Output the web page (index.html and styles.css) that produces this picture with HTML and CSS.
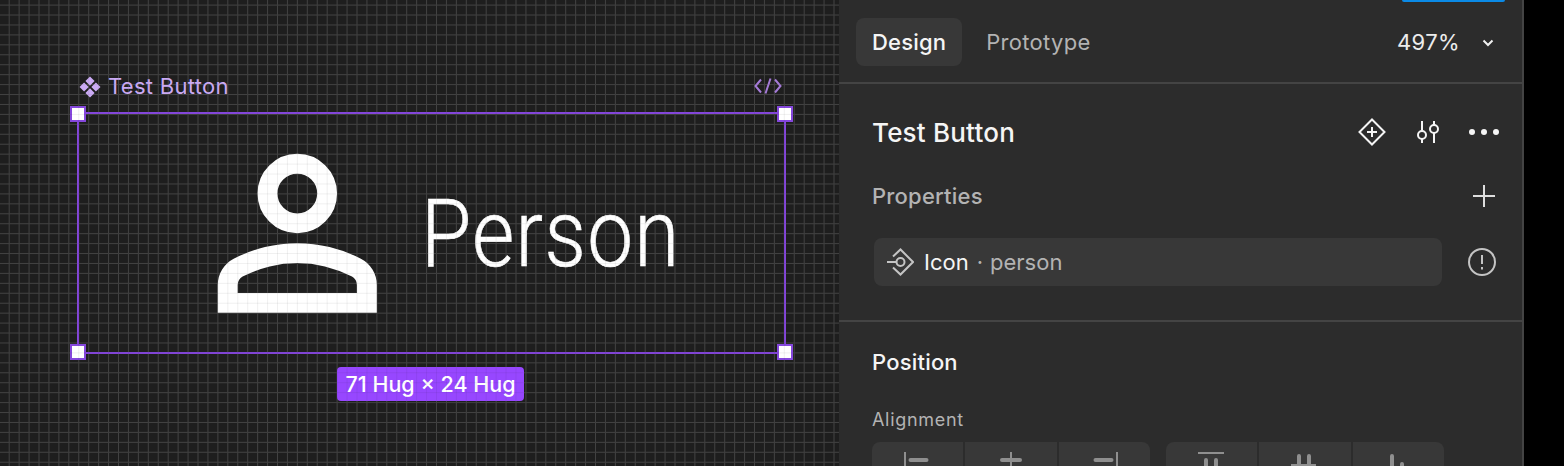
FILE: index.html
```html
<!DOCTYPE html>
<html lang="en">
<head>
  <meta charset="UTF-8" />
  <title>Test Button</title>
  <link rel="stylesheet" href="styles.css">
</head>
<body>
  <main class="canvas">
    <div class="frame-label">
      <svg class="diamonds" viewBox="0 0 22 22" width="22" height="22">
        <path d="M11 0.5l4.6 4.6L11 9.7 6.4 5.1zM5.1 6.4l4.6 4.6-4.6 4.6L0.5 11zM16.9 6.4l4.6 4.6-4.6 4.6L12.3 11zM11 12.3l4.6 4.6L11 21.5l-4.6-4.6z"/>
      </svg>
      <span>Test Button</span>
    </div>
    <svg class="code-mark" viewBox="0 0 28 18" width="28" height="18">
      <path d="M7 2.500L1.500 9 7 15.500M21 2.500L26.500 9 21 15.500M16.500 1.500L11.500 16.500"/>
    </svg>

    <div class="frame">
      <div class="button-preview">
        <svg class="person-icon" viewBox="0 -960 960 960">
          <path d="M480-480q-66 0-113-47t-47-113q0-66 47-113t113-47q66 0 113 47t47 113q0 66-47 113t-113 47ZM160-160v-112q0-34 17.5-62.5T224-378q62-31 126-46.5T480-440q66 0 130 15.5T736-378q29 15 46.5 43.5T800-272v112H160Zm80-80h480v-32q0-11-5.5-20T700-306q-54-27-109-40.5T480-360q-56 0-111 13.5T260-306q-9 5-14.5 14t-5.5 20v32Zm240-320q33 0 56.5-23.5T560-640q0-33-23.5-56.5T480-720q-33 0-56.5 23.5T400-640q0 33 23.5 56.5T480-560Z"/>
        </svg>
        <span class="person-text">Person</span>
      </div>
      <i class="handle top-left"></i>
      <i class="handle top-right"></i>
      <i class="handle bottom-left"></i>
      <i class="handle bottom-right"></i>
    </div>

    <div class="size-pill">71 Hug × 24 Hug</div>
    <div class="grid-over"></div>
  </main>

  <aside class="panel">
    <div class="share-strip"><span class="share-btn"></span></div>

    <section class="tabs">
      <span class="tab active">Design</span>
      <span class="tab">Prototype</span>
      <span class="zoom-value">497%</span>
      <svg class="chevron" viewBox="0 0 12 8" width="12" height="8"><path d="M1.500 1.500L6 6l4.500-4.500"/></svg>
    </section>

    <section class="component">
      <div class="title-row">
        <h1>Test Button</h1>
        <div class="title-icons">
          <svg class="line-icon" viewBox="0 0 28 28" width="28" height="28">
            <path d="M14 1.500L26.500 14 14 26.500 1.500 14zM14 9v10M9 14h10"/>
          </svg>
          <svg class="line-icon" viewBox="0 0 28 28" width="28" height="28">
            <circle cx="8" cy="17" r="4"/><circle cx="20" cy="11" r="4"/>
            <path d="M8 3v10M8 21v4M20 3v4M20 15v10"/>
          </svg>
          <svg class="dots" viewBox="0 0 30 6" width="30" height="6">
            <circle cx="3" cy="3" r="3"/><circle cx="15" cy="3" r="3"/><circle cx="27" cy="3" r="3"/>
          </svg>
        </div>
      </div>

      <div class="props-head">
        <h2>Properties</h2>
        <svg class="line-icon plus" viewBox="0 0 24 24" width="24" height="24"><path d="M12 1v22M1 12h22"/></svg>
      </div>

      <div class="prop-row">
        <div class="prop-field">
          <svg class="line-icon prop-icon" viewBox="0 0 28 28" width="28" height="28">
            <path d="M7 8.500L14.500 1.500 27 14 14.500 26.500 7 19.500M1 14h9"/>
            <circle cx="14.500" cy="14" r="4"/>
          </svg>
          <span class="prop-name">Icon</span>
          <span class="prop-sep">·</span>
          <span class="prop-value">person</span>
        </div>
        <svg class="line-icon alert" viewBox="0 0 28 28" width="28" height="28">
          <circle cx="14" cy="14" r="13"/>
          <path d="M14 7v9M14 19v2.400"/>
        </svg>
      </div>
    </section>

    <section class="position">
      <h2 class="position-title">Position</h2>
      <div class="align-label">Alignment</div>
      <div class="align-groups">
        <div class="align-group">
          <span class="align-btn"><svg viewBox="0 0 30 24" width="30" height="24"><path class="thin" d="M2 0v22"/><path d="M7.500 8h16"/></svg></span>
          <span class="align-btn"><svg viewBox="0 0 30 24" width="30" height="24"><path class="thin" d="M15 0v22"/><path d="M6 8h18"/></svg></span>
          <span class="align-btn"><svg viewBox="0 0 30 24" width="30" height="24"><path class="thin" d="M28 0v22"/><path d="M6.500 8h16"/></svg></span>
        </div>
        <div class="align-group">
          <span class="align-btn"><svg viewBox="0 0 30 24" width="30" height="24"><path class="thin" d="M1 1h26"/><path d="M9 8v16M19 8v16"/></svg></span>
          <span class="align-btn"><svg viewBox="0 0 30 24" width="30" height="24"><path d="M9 4v16M19 4v16"/><path class="bar" d="M1 13.500h25"/></svg></span>
          <span class="align-btn"><svg viewBox="0 0 30 24" width="30" height="24"><path d="M9 4v20M19 12v12"/></svg></span>
        </div>
      </div>
    </section>
  </aside>

  <div class="backdrop"></div>
</body>
</html>
```

FILE: styles.css
```css
:root {
  --canvas-bg: #1e1e1e;
  --grid-line: #464646;
  --panel-bg: #2c2c2c;
  --panel-line: #444444;
  --field-bg: #383838;
  --purple: #8547dc;
  --purple-label: #cbabf5;
  --text-main: #f5f5f5;
  --text-soft: #b3b3b3;
}

*, *::before, *::after {
  box-sizing: border-box;
}

html, body {
  height: 466px;
}

body {
  margin: 0;
  display: flex;
  overflow: hidden;
  background: #000;
  font-family: Inter, "Liberation Sans", sans-serif;
  color: var(--text-main);
}

/* canvas side */
.canvas {
  position: relative;
  width: 839px;
  flex: none;
  background-color: var(--canvas-bg);
  background-image:
    linear-gradient(to right, var(--grid-line) 1.3px, transparent 1.3px),
    linear-gradient(to bottom, var(--grid-line) 1.3px, transparent 1.3px);
  background-size: 9.94px 9.94px;
  background-position: 8.7px 4.6px;
}

.grid-over {
  position: absolute;
  inset: 0;
  pointer-events: none;
  background-image:
    linear-gradient(to right, rgba(0, 0, 0, 0.06) 1.3px, transparent 1.3px),
    linear-gradient(to bottom, rgba(0, 0, 0, 0.06) 1.3px, transparent 1.3px);
  background-size: 9.94px 9.94px;
  background-position: 8.7px 4.6px;
}

.frame-label {
  position: absolute;
  left: 79px;
  top: 73px;
  display: flex;
  align-items: center;
  gap: 7px;
  font-size: 22px;
  line-height: 27px;
  letter-spacing: 0.3px;
  color: var(--purple-label);
}

.diamonds {
  fill: var(--purple-label);
}

.code-mark {
  position: absolute;
  left: 754px;
  top: 77px;
  fill: none;
  stroke: #a57bd8;
  stroke-width: 2;
}

.frame {
  position: absolute;
  left: 77px;
  top: 112px;
  width: 709px;
  height: 242px;
  border: 2px solid var(--purple);
}

.button-preview {
  height: 100%;
  display: flex;
  align-items: center;
  padding-left: 98.5px;
}

.person-icon {
  width: 238.6px;
  height: 238.6px;
  flex: none;
  fill: #fff;
}

.person-text {
  display: block;
  margin: 1px 0 0 5px;
  font-family: Roboto, "Liberation Sans", sans-serif;
  font-weight: 300;
  font-size: 95px;
  line-height: 1;
  letter-spacing: 1.5px;
  color: #fff;
  -webkit-text-stroke: 0.6px #fff;
  transform: scaleX(0.86);
  transform-origin: left center;
}

.handle {
  position: absolute;
  width: 16px;
  height: 16px;
  background: #fff;
  border: 2px solid var(--purple);
}
.top-left { left: -9px; top: -8px; }
.top-right { right: -9px; top: -8px; }
.bottom-left { left: -9px; bottom: -8px; }
.bottom-right { right: -9px; bottom: -8px; }

.size-pill {
  position: absolute;
  left: 337px;
  top: 367px;
  height: 34px;
  width: 187px;
  display: flex;
  align-items: center;
  justify-content: center;
  background: #9747ff;
  border-radius: 4px;
  font-size: 21.5px;
  font-weight: 500;
  white-space: nowrap;
  color: #fff;
}

/* right panel */
.panel {
  width: 685px;
  flex: none;
  background: var(--panel-bg);
  border-right: 2px solid var(--panel-line);
  overflow: hidden;
}

.share-strip {
  height: 2px;
  padding-left: 563px;
}

.share-btn {
  display: block;
  width: 103px;
  height: 2px;
  background: #0b8ae6;
  border-radius: 0 0 6px 6px;
}

.tabs {
  height: 82px;
  padding: 16px 28px 0 17px;
  display: flex;
  align-items: flex-start;
  border-bottom: 2px solid var(--panel-line);
}

.tab {
  height: 48px;
  padding: 0 16px;
  display: flex;
  align-items: center;
  border-radius: 8px;
  font-size: 22px;
  letter-spacing: 0.3px;
  color: var(--text-soft);
}

.tab + .tab {
  margin-left: 8px;
}

.tab.active {
  background: var(--field-bg);
  color: var(--text-main);
  font-weight: 500;
  letter-spacing: 0.2px;
}

.zoom-value {
  margin-left: auto;
  height: 48px;
  display: flex;
  align-items: center;
  font-size: 22px;
  letter-spacing: 0.4px;
  color: #ececec;
}

.chevron {
  margin: 21px 0 0 22px;
  fill: none;
  stroke: #f0f0f0;
  stroke-width: 2;
}

.component {
  height: 238px;
  padding: 0 23px 0 33px;
  border-bottom: 2px solid var(--panel-line);
}

.title-row {
  height: 80px;
  padding-top: 16px;
  display: flex;
  align-items: center;
  justify-content: space-between;
}

h1 {
  margin: 0;
  font-size: 26px;
  font-weight: 500;
  letter-spacing: 0.2px;
}

h2 {
  margin: 0;
  font-size: 22px;
  font-weight: 500;
  letter-spacing: 0.2px;
}

.title-icons {
  display: flex;
  align-items: center;
  gap: 28px;
}

.line-icon {
  flex: none;
  fill: none;
  stroke: #f5f5f5;
  stroke-width: 2;
}

.dots {
  margin: 0 0 0 -1px;
  fill: #f5f5f5;
}

.props-head {
  height: 64px;
  display: flex;
  align-items: center;
  justify-content: space-between;
  color: var(--text-soft);
}

.plus {
  margin-right: 3px;
  stroke: #dedede;
}

.prop-row {
  display: flex;
  align-items: center;
  padding-left: 2px;
  margin-top: 10px;
}

.prop-field {
  width: 568px;
  height: 48px;
  padding-left: 12px;
  display: flex;
  align-items: center;
  background: var(--field-bg);
  border-radius: 8px;
  font-size: 22px;
}

.prop-icon {
  stroke: #c4c4c4;
  margin-right: 10px;
}

.prop-sep {
  margin: 0 7px 0 8px;
  color: var(--text-soft);
}

.prop-value {
  color: var(--text-soft);
}

.alert {
  margin-left: 26px;
  stroke: #c4c4c4;
}

.position {
  padding: 25px 0 0 33px;
}

.position-title {
  color: var(--text-main);
  line-height: 30px;
}

.align-label {
  margin-top: 32px;
  font-size: 18px;
  line-height: 22px;
  letter-spacing: 0.7px;
  color: var(--text-soft);
}

.align-groups {
  display: flex;
  gap: 16px;
  margin-top: 11px;
}

.align-group {
  width: 278px;
  height: 48px;
  display: grid;
  grid-template-columns: repeat(3, 1fr);
  gap: 2px;
  border-radius: 8px;
  overflow: hidden;
}

.align-btn {
  background: var(--field-bg);
  display: flex;
  justify-content: center;
  padding-top: 10px;
}

.align-btn svg {
  fill: none;
  stroke: #8f8f8f;
  stroke-width: 4;
  stroke-linecap: round;
}

.align-btn .thin {
  stroke-width: 2;
  stroke-linecap: butt;
}

.align-btn .bar {
  stroke-width: 3;
  stroke-linecap: butt;
}

.backdrop {
  flex: 1;
  background: #000;
}
```
